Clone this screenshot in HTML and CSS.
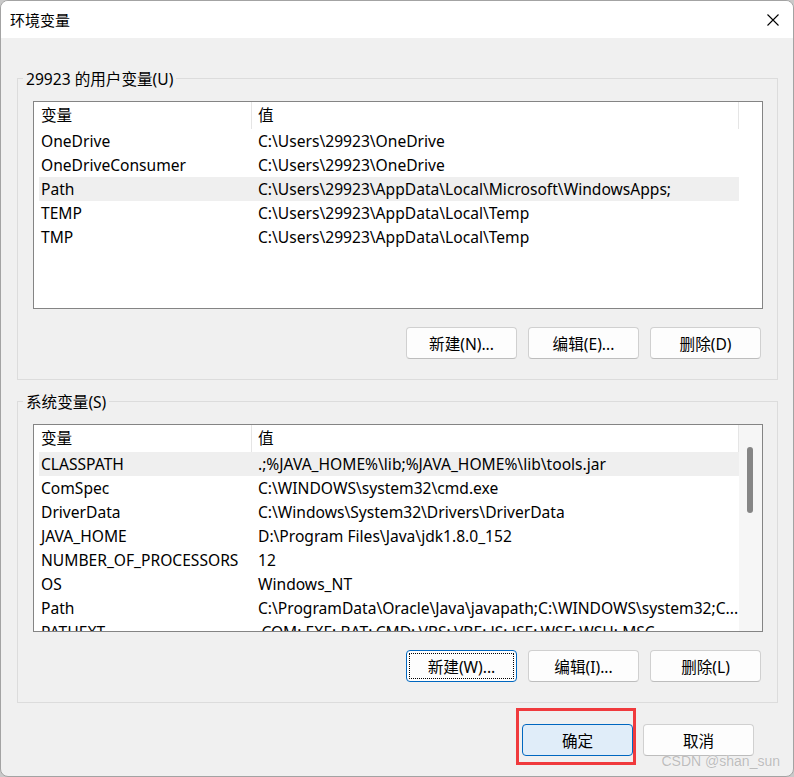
FILE: index.html
```html
<!DOCTYPE html>
<html lang="zh-CN">
<head>
  <meta charset="UTF-8">
  <title>环境变量</title>
  <link rel="stylesheet" href="styles.css">
</head>
<body>
  <div class="window">
    <div class="titlebar">
      <span class="title">环境变量</span>
      <a class="close">
        <svg width="12" height="12" viewBox="0 0 12 12">
          <path d="M0.5 0.5 L11.5 11.5 M11.5 0.5 L0.5 11.5" stroke="#000" stroke-width="1.1" fill="none"/>
        </svg>
      </a>
    </div>

    <div class="content">
      <div class="group">
        <div class="group-title">29923 的用户变量(U)</div>
        <div class="list">
          <div class="list-body">
            <div class="list-head">
              <div class="cell col-name">变量</div>
              <div class="cell col-value">值</div>
            </div>
            <div class="row"><div class="cell col-name">OneDrive</div><div class="cell col-value">C:\Users\29923\OneDrive</div></div>
            <div class="row"><div class="cell col-name">OneDriveConsumer</div><div class="cell col-value">C:\Users\29923\OneDrive</div></div>
            <div class="row selected"><div class="cell col-name">Path</div><div class="cell col-value">C:\Users\29923\AppData\Local\Microsoft\WindowsApps;</div></div>
            <div class="row"><div class="cell col-name">TEMP</div><div class="cell col-value">C:\Users\29923\AppData\Local\Temp</div></div>
            <div class="row"><div class="cell col-name">TMP</div><div class="cell col-value">C:\Users\29923\AppData\Local\Temp</div></div>
          </div>
          <div class="list-gutter"></div>
        </div>
        <div class="buttons">
          <a class="btn">新建(N)...</a>
          <a class="btn">编辑(E)...</a>
          <a class="btn">删除(D)</a>
        </div>
      </div>

      <div class="group group-system">
        <div class="group-title">系统变量(S)</div>
        <div class="list">
          <div class="list-body">
            <div class="list-head">
              <div class="cell col-name">变量</div>
              <div class="cell col-value">值</div>
            </div>
            <div class="row selected"><div class="cell col-name">CLASSPATH</div><div class="cell col-value">.;%JAVA_HOME%\lib;%JAVA_HOME%\lib\tools.jar</div></div>
            <div class="row"><div class="cell col-name">ComSpec</div><div class="cell col-value">C:\WINDOWS\system32\cmd.exe</div></div>
            <div class="row"><div class="cell col-name">DriverData</div><div class="cell col-value">C:\Windows\System32\Drivers\DriverData</div></div>
            <div class="row"><div class="cell col-name">JAVA_HOME</div><div class="cell col-value">D:\Program Files\Java\jdk1.8.0_152</div></div>
            <div class="row"><div class="cell col-name">NUMBER_OF_PROCESSORS</div><div class="cell col-value">12</div></div>
            <div class="row"><div class="cell col-name">OS</div><div class="cell col-value">Windows_NT</div></div>
            <div class="row"><div class="cell col-name">Path</div><div class="cell col-value">C:\ProgramData\Oracle\Java\javapath;C:\WINDOWS\system32;C...</div></div>
            <div class="row"><div class="cell col-name">PATHEXT</div><div class="cell col-value">.COM;.EXE;.BAT;.CMD;.VBS;.VBE;.JS;.JSE;.WSF;.WSH;.MSC</div></div>
          </div>
          <div class="list-gutter scrollbar">
            <div class="thumb"></div>
          </div>
        </div>
        <div class="buttons">
          <a class="btn focused">新建(W)...</a>
          <a class="btn">编辑(I)...</a>
          <a class="btn">删除(L)</a>
        </div>
      </div>

      <div class="footer">
        <a class="btn btn-ok marked">确定</a>
        <a class="btn">取消</a>
      </div>
    </div>

    <span class="watermark">CSDN @shan_sun</span>
  </div>
</body>
</html>
```

FILE: styles.css
```css
html, body {
  margin: 0;
  padding: 0;
}

body {
  background-color: #c9c9c9;
  font-family: "Noto Sans", "Noto Sans CJK SC", sans-serif;
  font-size: 15.6px;
  color: #000;
}

a {
  cursor: default;
}

.window {
  position: relative;
  box-sizing: border-box;
  width: 794px;
  height: 777px;
  border: 1px solid #a3a3a3;
  border-radius: 8px;
  background-color: #f0f0f0;
  overflow: hidden;
}

.titlebar {
  display: flex;
  align-items: center;
  justify-content: space-between;
  height: 37px;
  padding: 0 14px 0 9px;
  background-color: #fff;
}

.title {
  font-size: 15px;
}

.close {
  display: flex;
  width: 12px;
  height: 12px;
}

.content {
  padding: 40px 15px 0 16px;
}

.group {
  border: 1px solid #dcdcdc;
  padding: 0 14px 20px 15px;
}

.group-system {
  margin-top: 21px;
}

.group-title {
  width: fit-content;
  height: 22px;
  line-height: 22px;
  margin: -11px 0 0 -10px;
  padding: 0 3px;
  background-color: #f0f0f0;
}

.list {
  display: flex;
  height: 208px;
  margin-top: 11px;
  box-sizing: border-box;
  border: 1px solid #848484;
  background-color: #fff;
  overflow: hidden;
}

.list-body {
  width: 700px;
  padding-left: 5px;
}

.list-gutter {
  flex: 1;
}

.scrollbar {
  background-color: #f6f6f6;
  padding: 22px 0 0 8px;
}

.thumb {
  width: 6px;
  height: 66px;
  border-radius: 3px;
  background-color: #868686;
}

.list-head,
.row {
  display: grid;
  grid-template-columns: 213px 487px;
  white-space: nowrap;
}

.list-head {
  height: 27px;
  line-height: 27px;
}

.list-head .cell {
  border-right: 1px solid #e5e5e5;
}

.row {
  height: 24px;
  line-height: 24px;
}

.row.selected {
  background-color: #efefef;
}

.cell {
  overflow: hidden;
}

.col-name {
  padding-left: 2px;
}

.col-value {
  padding-left: 6px;
}

.buttons {
  display: flex;
  justify-content: flex-end;
  gap: 11px;
  margin-top: 18px;
  padding-right: 2px;
}

.btn {
  position: relative;
  display: flex;
  align-items: center;
  justify-content: center;
  box-sizing: border-box;
  width: 111px;
  height: 32px;
  border: 1px solid #d0d0d0;
  border-bottom-color: #bdbdbd;
  border-radius: 4px;
  background-color: #fdfdfd;
}

.btn.focused {
  border-color: #0067c0;
  outline: 1px dotted #000;
  outline-offset: -4px;
}

.btn-ok {
  border-color: #0067c0;
  background-color: #e0edf9;
}

.footer {
  display: flex;
  justify-content: flex-end;
  gap: 10px;
  margin-top: 21px;
  padding-right: 24px;
}

/* red annotation frame from the screenshot */
.marked::after {
  content: "";
  position: absolute;
  top: -17px;
  left: -7px;
  right: -4px;
  bottom: -10px;
  border: 3px solid #f03a3d;
}

.watermark {
  position: absolute;
  right: 13px;
  bottom: 7px;
  font-family: "Liberation Sans", sans-serif;
  font-size: 14px;
  color: #bdbdbd;
  text-shadow: 0 0 1px #fff;
}
```
